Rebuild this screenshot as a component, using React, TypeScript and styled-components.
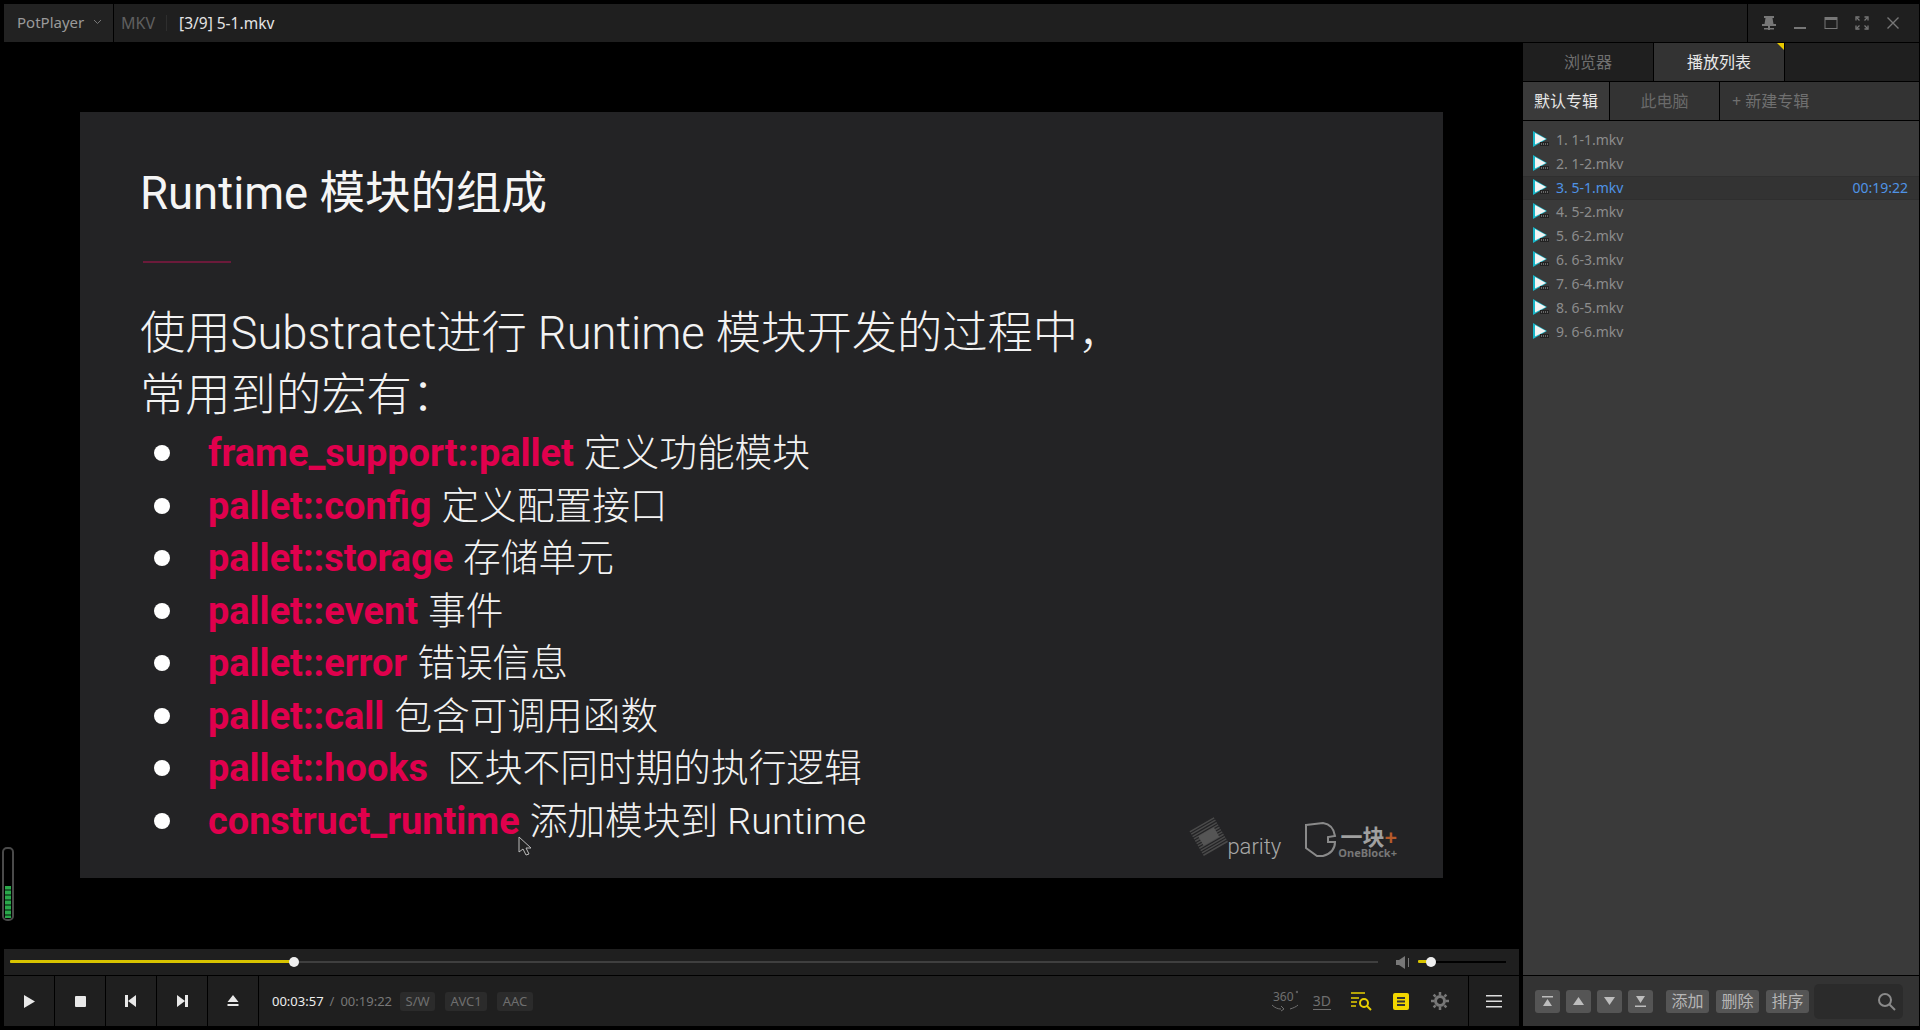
import React from "react";
import styled, { createGlobalStyle } from "styled-components";

const Global = createGlobalStyle`
  html, body { margin: 0; padding: 0; background: #000; }
  * { box-sizing: border-box; }
  body { font-family: "Noto Sans", "Noto Sans CJK SC", sans-serif; }
`;

const Page = styled.div`
  width: 1920px; height: 1030px; background: #000; overflow: hidden;
  padding: 4px 1px 4px 4px; display: flex; flex-direction: column; gap: 1px;
`;
const TitleBar = styled.header`
  height: 38px; flex: none; background: #1f1f1f; display: flex; align-items: center;
`;
const AppMenu = styled.div`
  width: 110px; height: 100%; display: flex; align-items: center; padding: 0 0 2px 13px; gap: 9px;
  color: #9a9a9a; font-size: 15px; border-right: 1px solid #000; background: #222;
`;
const Format = styled.span`
  color: #5f5f5f; font-size: 16px; margin-left: 7px; padding-right: 12px; position: relative;
  &::after { content: ""; position: absolute; right: 0; top: 3px; bottom: 3px; width: 1px; background: #2e2e2e; }
`;
const FileName = styled.span`
  color: #e4e4e4; font-size: 15.500px; margin-left: 12px;
`;
const WindowGroup = styled.div`
  margin-left: auto; height: 100%; width: 172px; display: flex; align-items: center;
  padding-left: 5px; border-left: 1px solid #000;
`;
const WindowButton = styled.div`
  width: 31px; height: 100%; display: flex; align-items: center; justify-content: center; color: #777;
`;
const Main = styled.div`
  flex: 1; min-height: 0; display: flex; gap: 4px;
`;
const Player = styled.section`
  width: 1515px; display: flex; flex-direction: column;
`;
const Video = styled.div`
  flex: 1; position: relative; display: flex; align-items: center; justify-content: center; min-height: 0; padding-bottom: 2px;
`;
const Slide = styled.div`
  width: 1363px; height: 766px; background: #232325; padding: 52px 0 0 60px; position: relative;
  font-family: Roboto, "Noto Sans CJK SC", sans-serif; font-weight: 300; color: #f2f2f2;
`;
const SlideTitle = styled.div`
  font-size: 45.500px; line-height: 60px; height: 60px; font-weight: 400; color: #f5f5f5;
`;
const RedRule = styled.div`
  width: 88px; height: 2px; background: #6b1a3a; margin: 37px 0 40px 3px;
`;
const Lead = styled.div`
  font-size: 45.300px; line-height: 62px; height: 62px; white-space: nowrap;
`;
const Points = styled.ul`
  list-style: none; margin: 0; padding: 0;
`;
const Point = styled.li`
  height: 52.500px; line-height: 52.500px; display: flex; align-items: center; font-size: 37.700px; white-space: nowrap;
  &::before { content: ""; width: 16px; height: 16px; border-radius: 50%; background: #fff; margin: 0 38px 0 14px; flex: none; }
`;
const Macro = styled.b`
  color: #e0004d; font-weight: 700; margin-right: 10px; font-size: 37.900px;
`;
const PointText = styled.span`
  white-space: pre;
`;
const Logos = styled.div`
  position: absolute; right: 46px; bottom: 20px; display: flex; align-items: flex-end; gap: 24px; color: #9a9a9a;
`;
const ParityLogo = styled.div`
  position: relative; width: 92px; height: 41px; font-size: 22px; font-weight: 300; line-height: 1;
  span { position: absolute; right: 0; bottom: 0; color: #a8a8a8; }
  svg { position: absolute; left: 0; top: 0; }
`;
const BlockLogo = styled.div`
  display: flex; align-items: flex-end; gap: 1px; height: 36px;
`;
const BlockText = styled.div`
  display: flex; flex-direction: column; align-items: flex-end; line-height: 1; font-family: "Noto Sans", "Noto Sans CJK SC", sans-serif;
`;
const BlockName = styled.div`
  font-size: 22px; font-weight: 700; color: #a0a0a0; i { color: #b55a2a; font-style: normal; font-weight: 700; }
`;
const BlockSub = styled.div`
  font-size: 11px; font-weight: 700; color: #777;
`;
const Cursor = styled.svg`
  position: absolute; left: 438px; top: 724px;
`;
const Meter = styled.div`
  position: absolute; left: -2px; bottom: 28px; width: 12px; height: 74px; border: 2px solid #4a4a4a; border-radius: 5px;
  display: flex; align-items: flex-end; padding: 1px;
`;
const MeterFill = styled.div`
  width: 100%; height: 32px; background: repeating-linear-gradient(to bottom, #2aa84a 0 3px, #145c28 3px 5px);
`;
const SeekBar = styled.div`
  height: 26px; flex: none; background: #1f1f1f; display: flex; align-items: center; padding: 0 0 0 6px; position: relative;
`;
const Track = styled.div`
  width: 1368px; height: 2px; background: #3f3f3f; position: relative;
`;
const TrackFill = styled.div`
  position: absolute; left: 0; top: -1px; height: 3px; background: #d8c400; border-radius: 1px;
`;
const Thumb = styled.div`
  position: absolute; top: 50%; width: 10px; height: 10px; border-radius: 50%; background: #eee; transform: translate(-50%, -50%);
`;
const VolumeIcon = styled.div`
  margin-left: 18px; width: 15px; display: flex; align-items: center;
`;
const VolumeTrack = styled.div`
  margin-left: 7px; width: 88px; height: 2px; background: #000; position: relative;
`;
const Controls = styled.div`
  height: 50px; flex: none; margin-top: 1px; background: #1f1f1f; display: flex; align-items: center;
`;
const CtrlButton = styled.div`
  width: 51px; height: 100%; flex: none; border-right: 1px solid #000; color: #e8e8e8;
  display: flex; align-items: center; justify-content: center;
`;
const Time = styled.span`
  font-size: 13px; color: #eee; margin-left: 13px; white-space: nowrap;
`;
const Slash = styled.span`
  font-size: 13px; color: #777; margin: 0 6px;
`;
const Total = styled.span`
  font-size: 13px; color: #777; white-space: nowrap; margin-right: -2px;
`;
const Chip = styled.span`
  height: 19px; padding: 0 5.500px; margin-left: 10px; background: #2b2b2b; border-radius: 3px; color: #6f6f6f;
  font-size: 13px; line-height: 19px; white-space: nowrap;
`;
const RightTools = styled.div`
  margin-left: auto; height: 100%; display: flex; align-items: center; gap: 0; color: #777;
`;
const Tool = styled.div`
  width: 39.500px; display: flex; justify-content: center; align-items: center;
`;
const Label3D = styled.span`
  font-size: 14px; line-height: 17px; width: 18px; color: #6f6f6f; border-bottom: 1px solid #6f6f6f; text-align: center; white-space: nowrap;
`;
const Menu = styled.div`
  width: 51px; height: 100%; margin-left: 8px; border-left: 1px solid #000; display: flex; align-items: center; justify-content: center; color: #ddd;
`;
const Panel = styled.aside`
  flex: 1; display: flex; flex-direction: column; background: #3a3a3a;
`;
const TabRow = styled.div`
  height: 38px; flex: none; display: flex; background: #1f1f1f; border-bottom: 1px solid #000; box-sizing: content-box;
`;
const Tab = styled.div<{ $on?: boolean }>`
  width: 131px; position: relative; border-right: 1px solid #000; display: flex; align-items: center; justify-content: center; padding-bottom: 2px;
  font-size: 16px; color: ${p => (p.$on ? "#e8e8e8" : "#6f6f6f")}; background: ${p => (p.$on ? "#333" : "transparent")};
`;
const Corner = styled.div`
  position: absolute; right: 0; top: 0; border-style: solid; border-width: 0 7px 7px 0; border-color: transparent #e8c800 transparent transparent;
`;
const SubRow = styled.div`
  height: 39px; flex: none; display: flex; background: #333; border-bottom: 1px solid #000;
`;
const SubTab = styled.div<{ $on?: boolean; $w?: number }>`
  width: ${p => p.$w}px; border-right: 1px solid #000; display: flex; align-items: center; justify-content: center; padding-bottom: 2px;
  font-size: 16px; color: ${p => (p.$on ? "#e8e8e8" : "#6a6a6a")}; background: ${p => (p.$on ? "#3a3a3a" : "transparent")};
`;
const AddAlbum = styled.div`
  font-size: 16px; color: #707070; display: flex; align-items: center; padding: 0 0 2px 12px;
`;
const List = styled.ol`
  flex: 1; margin: 0; padding: 7px 0 0; list-style: none;
`;
const Row = styled.li<{ $on?: boolean }>`
  height: 24px; display: flex; align-items: center; padding: 0 11px 2px 10px; gap: 7px; font-size: 14px;
  color: ${p => (p.$on ? "#4f93e6" : "#8c8c8c")};
  background: ${p => (p.$on ? "#333" : "transparent")};
  box-shadow: ${p => (p.$on ? "inset 0 1px 0 #2f2f2f, inset 0 -1px 0 #2f2f2f" : "none")};
`;
const RowTime = styled.span`
  margin-left: auto;
`;
const PanelFooter = styled.div`
  height: 51px; flex: none; border-top: 1px solid #000; background: #333; display: flex; align-items: center; padding: 0 13px 0 12px;
`;
const Square = styled.div`
  width: 25px; height: 23px; margin-right: 6px; border-radius: 3px; background: #555; display: flex; align-items: center; justify-content: center; color: #bdbdbd;
`;
const TextBtn = styled.div`
  width: 43px; height: 23px; margin-left: 7px; border-radius: 3px; background: #555; color: #b5b5b5;
  font-size: 16px; line-height: 23px; text-align: center;
  &:first-of-type { margin-left: 10px; }
`;
const Search = styled.div`
  width: 89px; height: 35px; margin-left: 5px; border-radius: 5px; background: #2b2b2b; display: flex; align-items: center; justify-content: flex-end; padding-right: 7px; color: #8a8a8a;
`;

const RowIcon = () => (
  <svg width="16" height="16" viewBox="0 0 16 16">
    <path d="M0 0 L14 8 L0 16 Z" fill="#19b7c9" />
    <path d="M2 2 L13 8 L2 13.500 Z" fill="#f4f4f4" />
    <rect x="7" y="11" width="9" height="4" fill="#222" />
    <path d="M8 13h1M10 13h1M12 13h1M14 13h1" stroke="#aaa" strokeWidth="1" />
  </svg>
);

const items = ["1-1", "1-2", "5-1", "5-2", "6-2", "6-3", "6-4", "6-5", "6-6"];
const points: [string, string][] = [
  ["frame_support::pallet", "定义功能模块"],
  ["pallet::config", "定义配置接口"],
  ["pallet::storage", "存储单元"],
  ["pallet::event", "事件"],
  ["pallet::error", "错误信息"],
  ["pallet::call", "包含可调用函数"],
  ["pallet::hooks", " 区块不同时期的执行逻辑"],
  ["construct_runtime", "添加模块到 Runtime"],
];

export default function App() {
  return (
    <Page>
      <Global />
      <TitleBar>
        <AppMenu>
          PotPlayer
          <svg width="9" height="6" viewBox="0 0 9 6"><path d="M1 1l3.500 3.500L8 1" fill="none" stroke="#777" /></svg>
        </AppMenu>
        <Format>MKV</Format>
        <FileName>[3/9] 5-1.mkv</FileName>
        <WindowGroup>
          <WindowButton>
            <svg width="14" height="15" viewBox="0 0 14 15" fill="currentColor"><path d="M2 0h10v2h-1.500l1 6H14v2H0V8h2.500l1-6H2zM6 10h2v4H6z" /><rect x="2" y="12" width="10" height="1.500" /></svg>
          </WindowButton>
          <WindowButton>
            <svg width="14" height="15" viewBox="0 0 14 15"><rect x="1" y="11" width="12" height="2" fill="currentColor" /></svg>
          </WindowButton>
          <WindowButton>
            <svg width="14" height="14" viewBox="0 0 14 14"><rect x="1" y="1.500" width="12" height="11" fill="none" stroke="currentColor" /><rect x="1" y="1" width="12" height="3" fill="currentColor" /></svg>
          </WindowButton>
          <WindowButton>
            <svg width="14" height="14" viewBox="0 0 14 14" fill="none" stroke="currentColor" strokeWidth="1.300"><path d="M1 4.500V1h3.500M9.500 1H13v3.500M13 9.500V13H9.500M4.500 13H1V9.500" /><path d="M1.500 1.500l3 3M12.500 1.500l-3 3M12.500 12.500l-3-3M1.500 12.500l3-3" /></svg>
          </WindowButton>
          <WindowButton>
            <svg width="14" height="14" viewBox="0 0 14 14"><path d="M1.500 1.500l11 11M12.500 1.500l-11 11" stroke="currentColor" strokeWidth="1.400" /></svg>
          </WindowButton>
        </WindowGroup>
      </TitleBar>
      <Main>
        <Player>
          <Video>
            <Slide>
              <SlideTitle>Runtime 模块的组成</SlideTitle>
              <RedRule />
              <Lead>使用Substratet进行 Runtime 模块开发的过程中，</Lead>
              <Lead>常用到的宏有：</Lead>
              <Points>
                {points.map(([m, d]) => (
                  <Point key={m}><Macro>{m}</Macro><PointText>{d}</PointText></Point>
                ))}
              </Points>
              <Logos>
                <ParityLogo>
                  <svg width="42" height="40" viewBox="0 0 42 40">
                    <g transform="rotate(-30 20 20)" stroke="#4a4a4a" strokeWidth="1.500">
                      {Array.from({ length: 11 }, (_, i) => (<line key={i} x1="6" x2="34" y1={6 + i * 2.700} y2={6 + i * 2.700} />))}
                      <rect x="11" y="14" width="18" height="11" fill="#555" stroke="none" />
                    </g>
                  </svg>
                  <span>parity</span>
                </ParityLogo>
                <BlockLogo>
                  <svg width="32" height="36" viewBox="0 0 32 36" fill="none" stroke="#8a8a8a" strokeWidth="2">
                    <path d="M1 3L18 1C25 2 29 7 30 14L23 15V20L30 20C30 28 25 32 18 34H12L1 26Z" />
                  </svg>
                  <BlockText>
                    <BlockName>一块<i>+</i></BlockName>
                    <BlockSub>OneBlock+</BlockSub>
                  </BlockText>
                </BlockLogo>
              </Logos>
              <Cursor width="14" height="20" viewBox="0 0 14 20">
                <path d="M1 1v15l4-3 3 6 3-1-3-6h5z" fill="#222" stroke="#bbb" />
              </Cursor>
            </Slide>
            <Meter><MeterFill /></Meter>
          </Video>
          <SeekBar>
            <Track>
              <TrackFill style={{ width: "284px" }} />
              <Thumb style={{ left: "284px" }} />
            </Track>
            <VolumeIcon>
              <svg width="15" height="13" viewBox="0 0 15 13" fill="#777"><path d="M0 4h3l6-4v13L3 9H0z" /><rect x="12" y="2" width="1" height="9" /></svg>
            </VolumeIcon>
            <VolumeTrack>
              <TrackFill style={{ width: "13px" }} />
              <Thumb style={{ left: "13px" }} />
            </VolumeTrack>
          </SeekBar>
          <Controls>
            <CtrlButton>
              <svg width="11" height="13" viewBox="0 0 11 13" fill="currentColor"><path d="M0 0l11 6.500L0 13z" /></svg>
            </CtrlButton>
            <CtrlButton>
              <svg width="11" height="11" viewBox="0 0 11 11" fill="currentColor"><rect width="11" height="11" rx="1" /></svg>
            </CtrlButton>
            <CtrlButton>
              <svg width="12" height="12" viewBox="0 0 12 12" fill="currentColor"><path d="M0 0h3v12H0zM11 0v12L3 6z" /></svg>
            </CtrlButton>
            <CtrlButton>
              <svg width="12" height="12" viewBox="0 0 12 12" fill="currentColor"><path d="M9 0h3v12H9zM1 0v12l8-6z" /></svg>
            </CtrlButton>
            <CtrlButton>
              <svg width="12" height="12" viewBox="0 0 12 12" fill="currentColor"><path d="M6 0l5.500 7H.5zM.5 9h11v2H.5z" /></svg>
            </CtrlButton>
            <Time>00:03:57</Time>
            <Slash>/</Slash>
            <Total>00:19:22</Total>
            <Chip>S/W</Chip>
            <Chip>AVC1</Chip>
            <Chip>AAC</Chip>
            <RightTools>
              <Tool>
                <svg width="32" height="24" viewBox="-5 0 32 24" fill="none" stroke="#6f6f6f">
                  <text x="2" y="12" fontSize="12" fill="#6f6f6f" stroke="none" fontFamily="Noto Sans">360</text>
                  <circle cx="26" cy="3" r="0.800" />
                  <path d="M1 16c3 3 6 4 9 4M27 16c-2 2-5 3-8 4M10 17l3 3-3 2" />
                </svg>
              </Tool>
              <Tool>
                <Label3D>3D</Label3D>
              </Tool>
              <Tool>
                <svg width="22" height="20" viewBox="0 0 22 20" fill="none" stroke="#e8d000" strokeWidth="1.500">
                  <path d="M1 2h14M1 7h8M1 11h6M1 15h5" />
                  <circle cx="14" cy="12" r="4" strokeWidth="2" />
                  <path d="M17 15l4 4" strokeWidth="2" />
                </svg>
              </Tool>
              <Tool>
                <svg width="16" height="17" viewBox="0 0 16 17"><rect width="16" height="17" rx="2" fill="#f2d600" /><path d="M4 5h8M4 8.500h8M4 12h8" stroke="#333" strokeWidth="2" /></svg>
              </Tool>
              <Tool>
                <svg width="18" height="18" viewBox="0 0 18 18" fill="none" stroke="#777" strokeWidth="3">
                  <circle cx="9" cy="9" r="4.500" />
                  <path d="M9 0v3M9 15v3M0 9h3M15 9h3M2.600 2.600l2 2M13.400 13.400l2 2M15.400 2.600l-2 2M4.600 13.400l-2 2" strokeWidth="2.500" />
                </svg>
              </Tool>
              <Menu>
                <svg width="16" height="13" viewBox="0 0 16 13" fill="currentColor"><rect y="0" width="16" height="1.500" /><rect y="5.500" width="16" height="1.500" /><rect y="11" width="16" height="1.500" /></svg>
              </Menu>
            </RightTools>
          </Controls>
        </Player>
        <Panel>
          <TabRow>
            <Tab>浏览器</Tab>
            <Tab $on>播放列表<Corner /></Tab>
          </TabRow>
          <SubRow>
            <SubTab $on $w={87}>默认专辑</SubTab>
            <SubTab $w={110}>此电脑</SubTab>
            <AddAlbum>+ 新建专辑</AddAlbum>
          </SubRow>
          <List>
            {items.map((n, i) => (
              <Row key={n} $on={i === 2}>
                <RowIcon />
                <span>{i + 1}. {n}.mkv</span>
                {i === 2 && <RowTime>00:19:22</RowTime>}
              </Row>
            ))}
          </List>
          <PanelFooter>
            <Square><svg width="11" height="11" viewBox="0 0 11 11" fill="currentColor"><path d="M0 0h11v1.500H0zM5.500 3L10 10H1z" /></svg></Square>
            <Square><svg width="11" height="8" viewBox="0 0 11 8" fill="currentColor"><path d="M5.500 0L11 8H0z" /></svg></Square>
            <Square><svg width="11" height="8" viewBox="0 0 11 8" fill="currentColor"><path d="M0 0h11L5.500 8z" /></svg></Square>
            <Square><svg width="11" height="11" viewBox="0 0 11 11" fill="currentColor"><path d="M1 0h9L5.500 7zM0 9.500h11V11H0z" /></svg></Square>
            <TextBtn>添加</TextBtn>
            <TextBtn>删除</TextBtn>
            <TextBtn>排序</TextBtn>
            <Search>
              <svg width="19" height="19" viewBox="0 0 19 19" fill="none" stroke="currentColor" strokeWidth="2"><circle cx="8" cy="8" r="6" /><path d="M12.500 12.500L18 18" /></svg>
            </Search>
          </PanelFooter>
        </Panel>
      </Main>
    </Page>
  );
}
